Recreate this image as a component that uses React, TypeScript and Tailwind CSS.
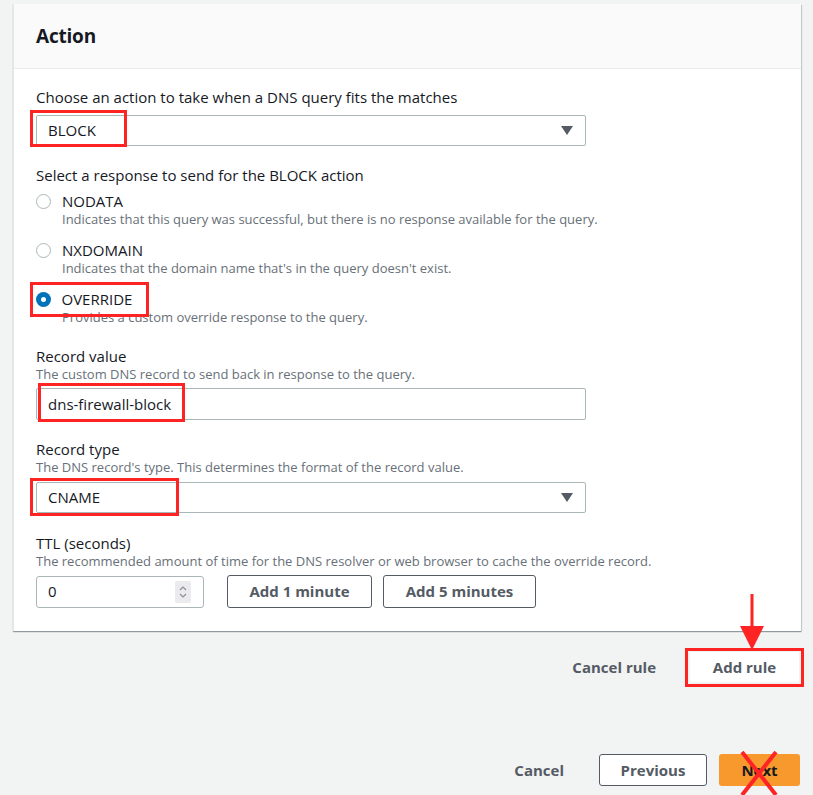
import React from "react";

const Caret = () => (
  <svg width="12" height="9" viewBox="0 0 12 9" className="block">
    <path d="M0 0 H12 L6 9 Z" fill="#545b64" />
  </svg>
);

function Radio({ checked, label, desc }: { checked?: boolean; label: string; desc: string }) {
  return (
    <div className="flex flex-col">
      <div className="flex items-center h-[18px]">
        {checked ? (
          <span className="w-[15px] h-[15px] rounded-full bg-[#0073bb] flex items-center justify-center ml-[-0.5px]">
            <span className="w-[5px] h-[5px] rounded-full bg-white" />
          </span>
        ) : (
          <span className="w-[15px] h-[15px] rounded-full border-[1.5px] border-[#aab7b8] bg-white" />
        )}
        <span className="ml-[11px] text-[15px] text-[#16191f]">{label}</span>
      </div>
      <div className="pl-[26px] text-[13px] leading-[18px] text-[#687078]">{desc}</div>
    </div>
  );
}

function Select({ value }: { value: string }) {
  return (
    <div className="w-[550px] h-[31px] border border-[#aab7b8] rounded-[2px] bg-white flex items-center justify-between pl-[11px] pr-[12px]">
      <span className="text-[15px] text-[#16191f]">{value}</span>
      <Caret />
    </div>
  );
}

export default function App() {
  return (
    <div
      className="relative w-[813px] h-[795px] bg-[#f2f3f3] overflow-hidden"
      style={{ fontFamily: '"Open Sans", "Liberation Sans", sans-serif' }}
    >
      <div className="pt-[4px] pl-[13px]">
        <div className="w-[788px] bg-white border-l border-[#e3e6e6] shadow-[0_1px_1px_0_rgba(0,28,36,0.3),1px_1px_1px_0_rgba(0,28,36,0.15)]">
          <div className="h-[65px] bg-[#fafafa] border-b border-[#eaeded] flex items-center px-[22px]">
            <span className="text-[19px] font-bold text-[#16191f] tracking-[-0.2px]">Action</span>
          </div>
          <div className="px-[22px] pt-[18px] pb-[23px] flex flex-col">
            <div className="text-[15px] leading-[20px] text-[#16191f]">
              Choose an action to take when a DNS query fits the matches
            </div>
            <div className="mt-[8px]">
              <Select value="BLOCK" />
            </div>
            <div className="mt-[19px] text-[15px] leading-[20px] text-[#16191f]">
              Select a response to send for the BLOCK action
            </div>
            <div className="mt-[7px] flex flex-col gap-[13px]">
              <Radio
                label="NODATA"
                desc="Indicates that this query was successful, but there is no response available for the query."
              />
              <Radio label="NXDOMAIN" desc="Indicates that the domain name that's in the query doesn't exist." />
              <Radio checked label="OVERRIDE" desc="Provides a custom override response to the query." />
            </div>

            <div className="mt-[20px] text-[15px] leading-[20px] text-[#16191f]">Record value</div>
            <div className="text-[13px] leading-[16px] text-[#687078]">
              The custom DNS record to send back in response to the query.
            </div>
            <div className="mt-[6px] w-[550px] h-[32px] border border-[#aab7b8] rounded-[2px] flex items-center pl-[11px]">
              <span className="text-[15px] text-[#16191f]">dns-firewall-block</span>
            </div>

            <div className="mt-[19px] text-[15px] leading-[20px] text-[#16191f]">Record type</div>
            <div className="text-[13px] leading-[16px] text-[#687078]">
              The DNS record's type. This determines the format of the record value.
            </div>
            <div className="mt-[7px]">
              <Select value="CNAME" />
            </div>

            <div className="mt-[20px] text-[15px] leading-[20px] text-[#16191f]">TTL (seconds)</div>
            <div className="text-[13px] leading-[16px] text-[#687078]">
              The recommended amount of time for the DNS resolver or web browser to cache the override record.
            </div>
            <div className="mt-[6px] flex items-center">
              <div className="w-[168px] h-[32px] border border-[#aab7b8] rounded-[3px] flex items-center justify-between pl-[11px] pr-[12px]">
                <span className="text-[15px] text-[#16191f]">0</span>
                <span className="w-[16px] h-[22px] bg-[#ebebef] rounded-[2px] flex items-center justify-center">
                  <svg width="10" height="14" viewBox="0 0 10 14">
                    <path d="M2 5 L5 2 L8 5" stroke="#8a9099" strokeWidth="1.2" fill="none" />
                    <path d="M2 9 L5 12 L8 9" stroke="#8a9099" strokeWidth="1.2" fill="none" />
                  </svg>
                </span>
              </div>
              <button className="ml-[23px] h-[33px] w-[145px] border border-[#545b64] rounded-[3px] bg-white text-[15px] font-bold text-[#545b64]">
                Add 1 minute
              </button>
              <button className="ml-[11px] h-[33px] w-[153px] border border-[#545b64] rounded-[3px] bg-white text-[15px] font-bold text-[#545b64]">
                Add 5 minutes
              </button>
            </div>
          </div>
        </div>
      </div>

      <div className="flex items-center justify-end pr-[14px] mt-[21px] h-[30px]">
        <span className="text-[15px] font-bold text-[#545b64] mr-[34px]">Cancel rule</span>
        <button className="w-[109px] h-[30px] bg-white rounded-[2px] text-[15px] font-bold text-[#545b64]">
          Add rule
        </button>
      </div>

      <div className="flex items-center justify-end pr-[13px] mt-[72px]">
        <span className="text-[15px] font-bold text-[#545b64] mr-[35px]">Cancel</span>
        <button className="w-[108px] h-[32px] bg-white border border-[#545b64] rounded-[3px] text-[15px] font-bold text-[#545b64] mr-[12px]">
          Previous
        </button>
        <button className="w-[81px] h-[32px] bg-[#f7992d] rounded-[3px] text-[15px] font-bold text-[#16191f]">
          Next
        </button>
      </div>

      {/* annotations */}
      <div className="absolute left-[30px] top-[110px] w-[97px] h-[37px] border-[3px] border-[#ff2424]" />
      <div className="absolute left-[30px] top-[282px] w-[119px] h-[35px] border-[3px] border-[#ff2424]" />
      <div className="absolute left-[38px] top-[383px] w-[147px] h-[39px] border-[3px] border-[#ff2424]" />
      <div className="absolute left-[30px] top-[478px] w-[149px] h-[38px] border-[3px] border-[#ff2424]" />
      <div className="absolute left-[685px] top-[648px] w-[119px] h-[39px] border-[3px] border-[#ff2424]" />
      <svg className="absolute left-[738px] top-[594px]" width="28" height="60" viewBox="0 0 28 60">
        <rect x="12.5" y="0" width="3" height="36" fill="#ff2424" />
        <path d="M2 32 H26 L14 56 Z" fill="#ff2424" />
      </svg>
      <svg className="absolute left-[736px] top-[748px]" width="46" height="47" viewBox="0 0 46 47">
        <path d="M6 4 L40 47 M40 4 L6 47" stroke="#ff2424" strokeWidth="4" />
      </svg>
    </div>
  );
}
